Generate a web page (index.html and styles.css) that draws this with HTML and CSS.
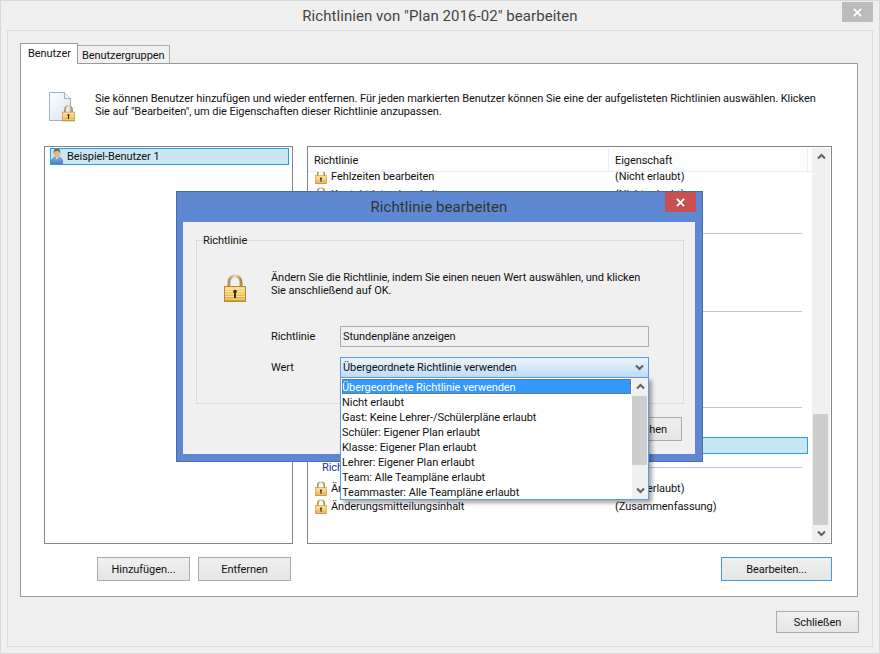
FILE: index.html
```html
<!DOCTYPE html>
<html lang="de">
<head>
  <meta charset="UTF-8">
  <title>Richtlinien bearbeiten</title>
  <link rel="stylesheet" href="styles.css">
</head>
<body>
  <svg class="defs" width="0" height="0">
    <defs>
      <linearGradient id="goldBody" x1="0" y1="0" x2="0" y2="1">
        <stop offset="0" stop-color="#fbe08c"/>
        <stop offset="0.55" stop-color="#f0bd50"/>
        <stop offset="1" stop-color="#d9992c"/>
      </linearGradient>
      <linearGradient id="shackle" x1="0" y1="0" x2="1" y2="0">
        <stop offset="0" stop-color="#a8926a"/>
        <stop offset="0.5" stop-color="#f3dfa4"/>
        <stop offset="1" stop-color="#a88a4e"/>
      </linearGradient>
      <linearGradient id="page" x1="0" y1="0" x2="1" y2="1">
        <stop offset="0" stop-color="#ffffff"/>
        <stop offset="1" stop-color="#d6e2f1"/>
      </linearGradient>
      <linearGradient id="shirt" x1="0" y1="0" x2="0" y2="1">
        <stop offset="0" stop-color="#8fb4e4"/>
        <stop offset="1" stop-color="#4a78bd"/>
      </linearGradient>
      <symbol id="lock" viewBox="0 0 22 28">
        <path d="M5 13V8a6 6 0 0 1 12 0v5" fill="none" stroke="url(#shackle)" stroke-width="3"/>
        <rect x="0.5" y="12.5" width="21" height="15" fill="url(#goldBody)" stroke="#b98a35"/>
        <path d="M1 15h20M1 17.5h20M1 20h20M1 22.500h20M1 25h20" stroke="#fff2c4" stroke-width="1" opacity="0.75"/>
        <circle cx="11" cy="17.500" r="1.800" fill="#3c2a10"/>
        <rect x="10" y="18" width="2" height="6" fill="#3c2a10"/>
      </symbol>
      <symbol id="user" viewBox="0 0 12 17">
        <path d="M0.500 16.500v-3c0-3 2.500-4.500 5.500-4.500s5.500 1.500 5.500 4.500v3z" fill="url(#shirt)" stroke="#4f74a8" stroke-width="0.700"/>
        <path d="M4.500 9l1.500 2.500L7.500 9z" fill="#e9e2cf"/>
        <ellipse cx="6" cy="5.500" rx="3.200" ry="3.800" fill="#e4b78a"/>
        <path d="M2.700 5.500C2.300 1.500 4 0.500 6 0.500s3.700 1 3.300 5C8.800 3.500 7.500 3 6 3S3.200 3.500 2.700 5.500z" fill="#6b6b6b"/>
      </symbol>
      <symbol id="chevUp" viewBox="0 0 9 7">
        <path d="M1 5.500l3.500-3.500 3.500 3.500" fill="none" stroke="#606060" stroke-width="2"/>
      </symbol>
      <symbol id="chevDown" viewBox="0 0 9 7">
        <path d="M1 1.500l3.500 3.500 3.500-3.500" fill="none" stroke="#606060" stroke-width="2"/>
      </symbol>
    </defs>
  </svg>

  <div class="window">
    <div class="titlebar">
      <span class="title">Richtlinien von "Plan 2016-02" bearbeiten</span>
      <div class="close close-idle">
        <svg class="close-x" viewBox="0 0 10 10"><path d="M1 1l8 8M9 1l-8 8" stroke="#fff" stroke-width="2"/></svg>
      </div>
    </div>

    <div class="frame">
      <div class="tabs">
        <div class="tab tab-active">Benutzer</div>
        <div class="tab">Benutzergruppen</div>
      </div>

      <div class="panel">
        <div class="intro">
          <svg class="doc-icon" viewBox="0 0 26 30">
            <path d="M0.500 0.500h15l6 6v22h-21z" fill="url(#page)" stroke="#9fb2ca"/>
            <path d="M15.500 0.500v6h6" fill="#eef3fa" stroke="#9fb2ca"/>
            <use href="#lock" x="13" y="12" width="13" height="18"/>
          </svg>
          <p class="intro-text">Sie können Benutzer hinzufügen und wieder entfernen. Für jeden markierten Benutzer können Sie eine der aufgelisteten Richtlinien auswählen. Klicken<br>Sie auf "Bearbeiten", um die Eigenschaften dieser Richtlinie anzupassen.</p>
        </div>

        <div class="lists">
          <div class="user-list">
            <div class="user-row">
              <svg class="user-icon"><use href="#user"/></svg>
              <span>Beispiel-Benutzer 1</span>
            </div>
          </div>

          <div class="policy-list">
            <div class="policy-table">
              <div class="policy-head">
                <div class="head-cell head-name">Richtlinie</div>
                <div class="head-cell head-value">Eigenschaft</div>
              </div>
              <div class="policy-rows">
                <div class="row">
                  <div class="cell-name"><svg class="lock-icon"><use href="#lock"/></svg>Fehlzeiten bearbeiten</div>
                  <div class="cell-value">(Nicht erlaubt)</div>
                </div>
                <div class="row">
                  <div class="cell-name"><svg class="lock-icon"><use href="#lock"/></svg>Kontaktdaten bearbeiten</div>
                  <div class="cell-value">(Nicht erlaubt)</div>
                </div>
                <div class="row"></div>

                <div class="group-head"><span class="group-line"></span></div>
                <div class="row"></div>
                <div class="row"></div>
                <div class="row"></div>

                <div class="group-head"><span class="group-line"></span></div>
                <div class="row"></div>
                <div class="row"></div>
                <div class="row"></div>
                <div class="row"></div>

                <div class="group-head"><span class="group-line"></span></div>
                <div class="row"></div>
                <div class="row row-selected"></div>

                <div class="group-head"><span class="group-name">Richtlinien</span><span class="group-line"></span></div>
                <div class="row">
                  <div class="cell-name"><svg class="lock-icon"><use href="#lock"/></svg>Änderungen</div>
                  <div class="cell-value">(Nicht erlaubt)</div>
                </div>
                <div class="row">
                  <div class="cell-name"><svg class="lock-icon"><use href="#lock"/></svg>Änderungsmitteilungsinhalt</div>
                  <div class="cell-value">(Zusammenfassung)</div>
                </div>
              </div>
            </div>
            <div class="scrollbar">
              <div class="arrow"><svg class="chev"><use href="#chevUp"/></svg></div>
              <div class="thumb thumb-main"></div>
              <div class="arrow"><svg class="chev"><use href="#chevDown"/></svg></div>
            </div>
          </div>
        </div>

        <div class="actions">
          <div class="actions-left">
            <button class="btn btn-list">Hinzufügen...</button>
            <button class="btn btn-list">Entfernen</button>
          </div>
          <button class="btn btn-edit">Bearbeiten...</button>
        </div>
      </div>

      <div class="footer">
        <button class="btn btn-close">Schließen</button>
      </div>
    </div>

    <!-- modal dialog on top of the window -->
    <div class="dialog">
      <div class="dialog-title">Richtlinie bearbeiten</div>
      <div class="close close-red">
        <svg class="close-x" viewBox="0 0 10 10"><path d="M1 1l8 8M9 1l-8 8" stroke="#fff" stroke-width="2"/></svg>
      </div>
      <div class="dialog-body">
        <fieldset class="groupbox">
          <legend class="groupbox-label">Richtlinie</legend>
          <div class="message">
            <svg class="big-lock"><use href="#lock"/></svg>
            <p class="message-text">Ändern Sie die Richtlinie, indem Sie einen neuen Wert auswählen, und klicken<br>Sie anschließend auf OK.</p>
          </div>
          <div class="form">
            <div class="form-label">Richtlinie</div>
            <div class="field-readonly">Stundenpläne anzeigen</div>
            <div class="form-label">Wert</div>
            <div class="combo">
              <div class="combo-box">
                <span>Übergeordnete Richtlinie verwenden</span>
                <svg class="chev"><use href="#chevDown"/></svg>
              </div>
              <div class="dropdown">
                <ul class="options">
                  <li class="option option-selected">Übergeordnete Richtlinie verwenden</li>
                  <li class="option">Nicht erlaubt</li>
                  <li class="option">Gast: Keine Lehrer-/Schülerpläne erlaubt</li>
                  <li class="option">Schüler: Eigener Plan erlaubt</li>
                  <li class="option">Klasse: Eigener Plan erlaubt</li>
                  <li class="option">Lehrer: Eigener Plan erlaubt</li>
                  <li class="option">Team: Alle Teampläne erlaubt</li>
                  <li class="option">Teammaster: Alle Teampläne erlaubt</li>
                </ul>
                <div class="scrollbar scrollbar-small">
                  <div class="arrow"><svg class="chev"><use href="#chevUp"/></svg></div>
                  <div class="thumb thumb-drop"></div>
                  <div class="arrow arrow-end"><svg class="chev"><use href="#chevDown"/></svg></div>
                </div>
              </div>
            </div>
          </div>
        </fieldset>
        <div class="dialog-actions">
          <button class="btn btn-dialog">Abbrechen</button>
        </div>
      </div>
    </div>
  </div>
</body>
</html>
```

FILE: styles.css
```css
* {
  box-sizing: border-box;
}
body {
  margin: 0;
  font-family: Roboto, sans-serif;
  font-size: 11px;
  line-height: 13px;
  letter-spacing: -0.06px;
  color: #111;
  background: #eee;
}
p {
  margin: 0;
  white-space: nowrap;
}
.defs {
  position: absolute;
}

/* main window */
.window {
  position: relative;
  width: 880px;
  height: 654px;
  border: 1px solid #d8d8d8;
  background: #efefef;
  display: flex;
  flex-direction: column;
}
.titlebar {
  height: 29px;
  display: flex;
  justify-content: center;
  align-items: center;
  padding-top: 1px;
}
.title {
  font-size: 15px;
  letter-spacing: 0.06px;
  color: #444;
}
.close {
  position: absolute;
  height: 20px;
  display: flex;
  align-items: center;
  justify-content: center;
}
.close-idle {
  top: 1px;
  right: 6px;
  width: 31px;
  background: #bcbcbc;
}
.close-red {
  top: 0;
  right: 6px;
  width: 31px;
  background: #c75050;
}
.close-x {
  width: 9px;
  height: 9px;
}
.frame {
  flex: 1;
  margin: 0 6px 6px;
  border: 1px solid #dcdcdc;
  padding: 12px 14px 0 12px;
  display: flex;
  flex-direction: column;
}

/* tabs */
.tabs {
  display: flex;
  align-items: flex-end;
  height: 21px;
  position: relative;
  z-index: 1;
  margin-bottom: -1px;
}
.tab {
  height: 19px;
  padding: 3px 3px 0 4px;
  border: 1px solid #acacac;
  border-bottom: 1px solid #999;
  border-left: 0;
  background: #f0f0f0;
  width: 92px;
}
.tab-active {
  height: 21px;
  width: 58px;
  padding: 3px 0 0 7px;
  border: 1px solid #999;
  border-bottom: 0;
  background: #fff;
}
.panel {
  height: 534px;
  border: 1px solid #999;
  background: #fff;
  padding: 28px 25px 0 23px;
}
.intro {
  display: flex;
  gap: 20px;
  height: 30px;
  margin-bottom: 24px;
  padding-left: 5px;
}
.doc-icon {
  width: 26px;
  height: 30px;
  flex: none;
}

/* lists */
.lists {
  display: flex;
  gap: 14px;
  height: 398px;
}
.user-list {
  width: 249px;
  border: 1px solid #82858c;
  padding: 1px 3px 0 5px;
}
.user-row {
  display: flex;
  align-items: center;
  gap: 4px;
  height: 17px;
  padding-left: 1px;
  background: #c9e6f5;
  outline: 1px solid #26a0da;
  outline-offset: -1px;
}
.user-icon {
  width: 12px;
  height: 17px;
  flex: none;
}
.policy-list {
  flex: 1;
  border: 1px solid #82858c;
  display: flex;
  padding: 1px 1px 1px 0;
}
.policy-table {
  flex: 1;
  min-width: 0;
  overflow: hidden;
}
.policy-head {
  position: relative;
  z-index: 1;
  height: 24px;
  background: #fdfdfd;
  border-bottom: 1px solid #e5eefa;
  display: flex;
}
.head-cell {
  padding: 6px 0 0 6px;
}
.head-name {
  width: 301px;
  border-right: 1px solid #e5eefa;
}
.head-value {
  width: 199px;
  border-right: 1px solid #e5eefa;
}
.policy-rows {
  margin-top: -5px;
}
.row {
  display: grid;
  grid-template-columns: 300px 1fr;
  height: 18px;
  margin-right: 4px;
  align-items: center;
}
.row-selected {
  background: #c9e6f5;
  outline: 1px solid #26a0da;
  outline-offset: -1px;
  height: 17px;
}
.cell-name {
  display: flex;
  align-items: center;
  gap: 4px;
  padding-left: 7px;
}
.cell-value {
  padding-left: 7px;
}
.lock-icon {
  width: 12px;
  height: 15px;
  flex: none;
}
.group-head {
  display: flex;
  align-items: center;
  height: 17px;
  margin: 4px 10px 3px 0;
  padding-left: 14px;
  color: #1f2fa8;
}
.row-selected + .group-head {
  margin-top: 5px;
}
.group-line {
  flex: 1;
  height: 1px;
  margin-left: 8px;
  background: #b9c6de;
}

/* scrollbars */
.scrollbar {
  width: 18px;
  flex: none;
  background: #f0f0f0;
  display: flex;
  flex-direction: column;
}
.scrollbar-small {
  width: 16px;
}
.arrow {
  height: 17px;
  flex: none;
  display: flex;
  align-items: center;
  justify-content: center;
}
.arrow-end {
  margin-top: auto;
}
.chev {
  width: 9px;
  height: 7px;
}
.thumb {
  background: #cdcdcd;
  margin-left: 1px;
}
.thumb-main {
  margin-top: auto;
  width: 15px;
  height: 111px;
}
.thumb-drop {
  margin-top: 1px;
  width: 15px;
  height: 69px;
  margin-left: 0;
}

/* buttons */
.btn {
  font: inherit;
  letter-spacing: inherit;
  color: #111;
  height: 24px;
  padding: 0;
  border: 1px solid #acacac;
  background: linear-gradient(#f0f0f0, #e5e5e5);
}
.actions {
  display: flex;
  justify-content: space-between;
  margin-top: 13px;
}
.actions-left {
  width: 249px;
  display: flex;
  justify-content: flex-end;
  gap: 8px;
  padding-right: 2px;
}
.btn-list {
  width: 93px;
}
.btn-edit {
  width: 111px;
  border-color: #3f9ae8;
}
.footer {
  display: flex;
  justify-content: flex-end;
  margin: 14px -1px 0 0;
}
.btn-close {
  width: 83px;
  height: 22px;
}

/* dialog */
.dialog {
  position: absolute;
  left: 175px;
  top: 190px;
  width: 527px;
  height: 271px;
  z-index: 5;
  border: 1px solid #4a6cab;
  background: #5f88d2;
  display: flex;
  flex-direction: column;
  padding: 0 7px 7px 6px;
}
.dialog-title {
  height: 30px;
  font-size: 15px;
  letter-spacing: 0.06px;
  line-height: 30px;
  text-align: center;
  color: #333;
}
.dialog-body {
  flex: 1;
  background: #f0f0f0;
  padding: 12px 12px 0 13px;
}
.groupbox {
  margin: 0;
  padding: 0;
  height: 170px;
  width: 488px;
  min-width: 0;
  border: 1px solid #dcdcdc;
}
.groupbox-label {
  margin-left: 6px;
  padding: 0;
  height: 13px;
}
.message {
  display: flex;
  gap: 25px;
  margin-top: 24px;
  padding-left: 27px;
}
.big-lock {
  width: 22px;
  height: 28px;
  margin-top: 3px;
  flex: none;
}
.form {
  display: grid;
  grid-template-columns: 69px 309px;
  grid-auto-rows: 21px;
  row-gap: 10px;
  margin: 24px 0 0 74px;
  align-items: center;
}
.field-readonly {
  height: 21px;
  border: 1px solid #acacac;
  background: #f0f0f0;
  padding: 3px 0 0 2px;
}
.combo {
  position: relative;
}
.combo-box {
  height: 21px;
  border: 1px solid #569de5;
  background: linear-gradient(#ecf4fc, #bedcf8);
  padding: 0 4px 0 2px;
  display: flex;
  justify-content: space-between;
  align-items: center;
}
.dropdown {
  position: absolute;
  left: 0;
  top: 20px;
  width: 309px;
  height: 123px;
  background: #fff;
  border: 1px solid #569de5;
  box-shadow: 3px 3px 4px rgba(0, 0, 0, 0.35);
  display: flex;
  justify-content: space-between;
}
.options {
  list-style: none;
  margin: 0;
  padding: 1px 0 0 1px;
  width: 290px;
}
.option {
  height: 15px;
  line-height: 17px;
}
.option-selected {
  background: #3399ff;
  color: #fff;
  outline: 1px dotted #a05a10;
  outline-offset: -1px;
}
.dialog-actions {
  display: flex;
  justify-content: flex-end;
  margin: 13px 1px 0 0;
}
.btn-dialog {
  width: 82px;
}
```
